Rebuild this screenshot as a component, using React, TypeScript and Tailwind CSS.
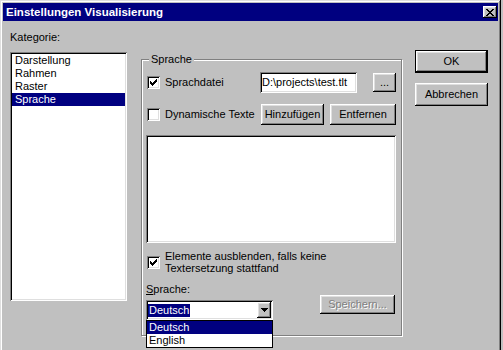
import React from "react";

const raised =
  "shadow-[inset_-1px_-1px_#000,inset_1px_1px_#fff,inset_-2px_-2px_#808080,inset_2px_2px_#dfdfdf]";
const sunken =
  "shadow-[inset_1px_1px_#808080,inset_-1px_-1px_#fff,inset_2px_2px_#000,inset_-2px_-2px_#dfdfdf]";

function Check({ checked }: { checked: boolean }) {
  return (
    <div
      className={`w-[13px] h-[13px] bg-white shrink-0 flex items-center justify-center ${sunken}`}
    >
      {checked && (
        <svg width="7" height="7" viewBox="0 0 7 7" shapeRendering="crispEdges">
          <path
            d="M0 2h1v3H0zM1 3h1v3H1zM2 4h1v3H2zM3 3h1v3H3zM4 2h1v3H4zM5 1h1v3H5zM6 0h1v3H6z"
            fill="#000"
          />
        </svg>
      )}
    </div>
  );
}

function Btn({
  children,
  className = "",
  disabled = false,
}: {
  children: React.ReactNode;
  className?: string;
  disabled?: boolean;
}) {
  return (
    <div
      className={`flex items-center justify-center bg-[#c0c0c0] ${raised} ${className} ${
        disabled ? "text-[#808080] [text-shadow:1px_1px_0_#fff]" : ""
      }`}
    >
      {children}
    </div>
  );
}

export default function App() {
  return (
    <div className="w-[503px] h-[350px] overflow-hidden bg-[#c0c0c0] font-['Liberation_Sans',Arial,sans-serif] text-[11px] leading-[13px] text-black">
      <div className="w-[501px] h-[360px] p-[3px] shadow-[inset_-1px_-1px_#000,inset_1px_1px_#dfdfdf,inset_-2px_-2px_#808080,inset_2px_2px_#fff]">
        {/* Title bar */}
        <div className="h-[18px] bg-[#000080] flex items-center pl-[3px] pr-[1px]">
          <span className="font-bold text-white text-[11.5px] leading-[13px]">
            Einstellungen Visualisierung
          </span>
          <div className={`ml-auto w-[14px] h-[12px] bg-[#c0c0c0] flex items-center justify-center ${raised}`}>
            <svg width="8" height="7" viewBox="0 0 8 7" shapeRendering="crispEdges">
              <path
                d="M0 0h2v1H0zM6 0h2v1H6zM1 1h2v1H1zM5 1h2v1H5zM2 2h4v1H2zM3 3h2v1H3zM2 4h4v1H2zM1 5h2v1H1zM5 5h2v1H5zM0 6h2v1H0zM6 6h2v1H6z"
                fill="#000"
              />
            </svg>
          </div>
        </div>

        {/* Body */}
        <div className="flex items-start pl-[7px]">
          {/* Left column */}
          <div className="w-[117px] pt-[10px] flex flex-col">
            <div>Kategorie:</div>
            <div className={`mt-[8px] h-[249px] bg-white p-[2px] ${sunken}`}>
              <div className="h-[13px] pl-[3px]">Darstellung</div>
              <div className="h-[13px] pl-[3px]">Rahmen</div>
              <div className="h-[13px] pl-[3px]">Raster</div>
              <div className="h-[13px] pl-[3px] bg-[#000080] text-white">Sprache</div>
            </div>
          </div>

          {/* Group box */}
          <div className="relative ml-[14px] mt-[38px] w-[261px] border border-[#808080] shadow-[inset_1px_1px_#fff,1px_1px_#fff] pt-[12px] pl-[4px] pr-[5px] pb-[15px]">
            <div className="absolute left-[7px] top-[-7px] px-[2px] bg-[#c0c0c0] leading-[13px]">
              Sprache
            </div>

            {/* Row 1 */}
            <div className="flex items-center h-[21px]">
              <div className="ml-[1px]">
                <Check checked />
              </div>
              <div className="ml-[5px] w-[95px]">Sprachdatei</div>
              <div className={`w-[97px] h-[21px] bg-white pl-[2px] flex items-center ${sunken}`}>
                D:\projects\test.tlt
              </div>
              <Btn className="ml-auto w-[23px] h-[19px]">...</Btn>
            </div>

            {/* Row 2 */}
            <div className="flex items-center h-[21px] mt-[11px]">
              <div className="ml-[1px]">
                <Check checked={false} />
              </div>
              <div className="ml-[5px] w-[96px] whitespace-nowrap">Dynamische Texte</div>
              <Btn className="w-[63px] h-[21px]">Hinzufügen</Btn>
              <Btn className="ml-[6px] w-[66px] h-[21px]">Entfernen</Btn>
            </div>

            {/* Text list box */}
            <div className={`mt-[10px] h-[108px] bg-white ${sunken}`} />

            {/* Row 3 */}
            <div className="flex items-start mt-[7px]">
              <div className="ml-[1px] mt-[6px]">
                <Check checked />
              </div>
              <div className="ml-[5px] leading-[12px]">
                Elemente ausblenden, falls keine
                <br />
                Textersetzung stattfand
              </div>
            </div>

            {/* Sprache combo row */}
            <div className="flex items-start mt-[9px]">
              <div className="flex flex-col w-[127px]">
                <div>
                  <span className="underline">S</span>prache:
                </div>
                <div className={`relative mt-[4px] h-[20px] bg-white p-[2px] flex items-center ${sunken}`}>
                  <span className="bg-[#000080] text-white px-[1px] leading-[13px]">Deutsch</span>
                  <div className={`ml-auto w-[14px] h-[16px] bg-[#c0c0c0] flex items-center justify-center ${raised}`}>
                    <svg width="7" height="4" viewBox="0 0 7 4" shapeRendering="crispEdges">
                      <path d="M0 0h7v1H0zM1 1h5v1H1zM2 2h3v1H2zM3 3h1v1H3z" fill="#000" />
                    </svg>
                  </div>
                  <div className="absolute left-0 top-full w-[127px] border border-black bg-white z-10">
                    <div className="h-[13px] pl-[2px] bg-[#000080] text-white">Deutsch</div>
                    <div className="h-[13px] pl-[2px]">English</div>
                  </div>
                </div>
              </div>
              <Btn disabled className="ml-auto mr-[1px] mt-[12px] w-[75px] h-[19px]">
                Speichern...
              </Btn>
            </div>
          </div>

          {/* Right column */}
          <div className="ml-[13px] mt-[29px] flex flex-col gap-[10px]">
            <div className="w-[73px] h-[23px] border border-black">
              <Btn className="w-full h-full">OK</Btn>
            </div>
            <Btn className="w-[73px] h-[23px]">Abbrechen</Btn>
          </div>
        </div>
      </div>
    </div>
  );
}
